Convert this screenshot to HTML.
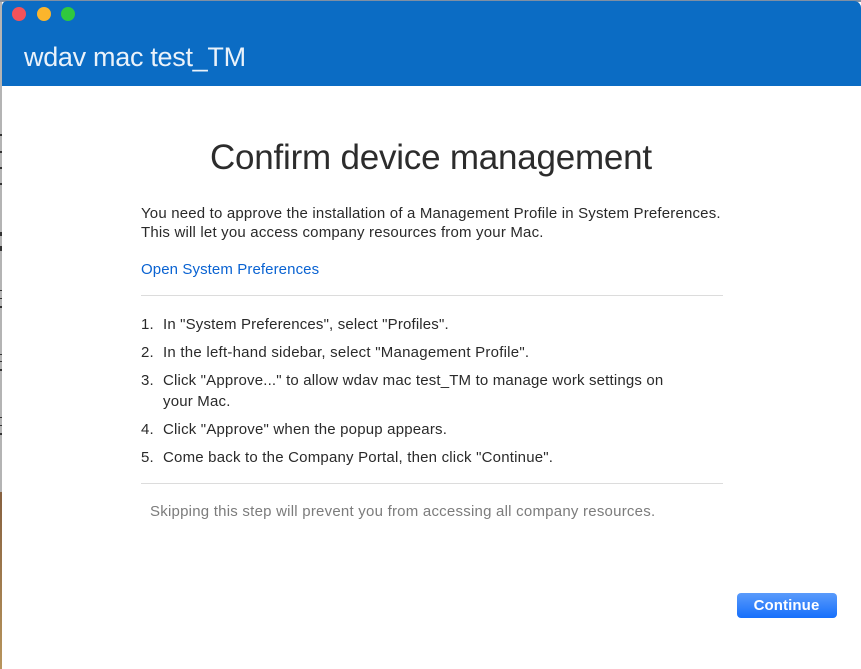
<!DOCTYPE html>
<html><head><meta charset="utf-8">
<style>
html,body{margin:0;padding:0;width:861px;height:669px;overflow:hidden;background:#fff;font-family:"Liberation Sans",sans-serif}
#w{position:absolute;left:0;top:0;width:861px;height:669px;filter:blur(.35px)}
.abs{position:absolute;white-space:nowrap}
#bar{position:absolute;left:2px;top:1px;width:859px;height:85px;background:#0b6cc4;border-radius:5px 7px 0 0}
.dot{position:absolute;width:14px;height:14px;border-radius:50%;top:7px}
.t{font-size:15px;letter-spacing:.19px;color:#2a2a2a;line-height:20px}
hr{position:absolute;left:141px;width:582px;margin:0;border:0;height:1px;background:#dcdcdc}
.m{position:absolute;left:0;width:2px;height:2px;background:#333}
</style></head><body>
<div id="w">
<div class="abs" style="left:0;top:0;width:861px;height:2px;background:#7f8fa3"></div>
<div class="abs" style="left:0;top:2px;width:2px;height:490px;background:#b4b4b4"></div>
<div class="abs" style="left:0;top:492px;width:2px;height:177px;background:linear-gradient(#86603f,#b8955c)"></div>
<div class="m" style="top:134px"></div><div class="m" style="top:151px"></div><div class="m" style="top:167px"></div><div class="m" style="top:183px"></div>
<div class="m" style="top:232px;height:4px"></div><div class="m" style="top:246px;height:5px"></div>
<div class="m" style="top:290px;height:1px"></div><div class="m" style="top:298px;height:1px"></div><div class="m" style="top:306px"></div>
<div class="m" style="top:354px;height:1px"></div><div class="m" style="top:361px;height:1px"></div><div class="m" style="top:369px"></div>
<div class="m" style="top:417px;height:1px"></div><div class="m" style="top:425px;height:1px"></div><div class="m" style="top:433px"></div>
<div id="bar"></div>
<div class="dot" style="left:12px;background:#f4525a"></div>
<div class="dot" style="left:37px;background:#fbb52c"></div>
<div class="dot" style="left:61px;background:#30c83e"></div>
<div class="abs" style="left:24px;top:40px;font-size:27px;line-height:34px;color:#eaf2fa;letter-spacing:-.3px">wdav mac test_TM</div>
<div class="abs" style="left:210px;top:136px;font-size:35px;line-height:44px;color:#2c2c2c;letter-spacing:-.22px">Confirm device management</div>
<div class="abs t" style="left:141px;top:204px;letter-spacing:.18px">You need to approve the installation of a Management Profile in System Preferences.</div>
<div class="abs t" style="left:141px;top:223px;letter-spacing:.19px">This will let you access company resources from your Mac.</div>
<div class="abs t" style="left:141px;top:260px;color:#0a63d2;letter-spacing:.1px">Open System Preferences</div>
<hr style="top:295px">
<div class="abs t" style="left:141px;top:315px">1.</div><div class="abs t" style="left:163px;top:315px;letter-spacing:.16px">In "System Preferences", select "Profiles".</div>
<div class="abs t" style="left:141px;top:343px">2.</div><div class="abs t" style="left:163px;top:343px;letter-spacing:.24px">In the left-hand sidebar, select "Management Profile".</div>
<div class="abs t" style="left:141px;top:371px">3.</div><div class="abs t" style="left:163px;top:371px;letter-spacing:.17px">Click "Approve..." to allow wdav mac test_TM to manage work settings on</div>
<div class="abs t" style="left:163px;top:392px">your Mac.</div>
<div class="abs t" style="left:141px;top:420px">4.</div><div class="abs t" style="left:163px;top:420px">Click "Approve" when the popup appears.</div>
<div class="abs t" style="left:141px;top:448px">5.</div><div class="abs t" style="left:163px;top:448px;letter-spacing:.2px">Come back to the Company Portal, then click "Continue".</div>
<hr style="top:483px">
<div class="abs t" style="left:150px;top:502px;color:#7c7c7c;letter-spacing:.23px">Skipping this step will prevent you from accessing all company resources.</div>
<div class="abs" style="left:737px;top:593px;width:99px;padding-right:1px;height:25px;border-radius:4px;background:linear-gradient(#5a9bfb,#166ffb);color:#fff;font-size:15px;font-weight:bold;letter-spacing:.1px;line-height:25px;text-align:center">Continue</div>
</div>
</body></html>
